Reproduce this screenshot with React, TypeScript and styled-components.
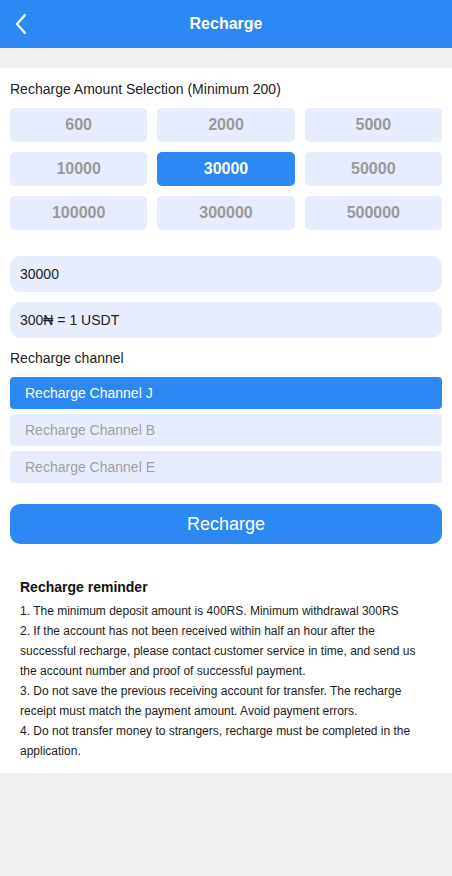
import React, { useState } from "react";
import styled, { createGlobalStyle } from "styled-components";

const Global = createGlobalStyle`
  html, body { margin: 0; padding: 0; background: #f0f0f0; }
  body { font-family: "Liberation Sans", Arial, sans-serif; }
  * { box-sizing: border-box; }
`;

const Page = styled.div`
  width: 452px;
  min-height: 876px;
  background: #f0f0f0;
`;

const Header = styled.header`
  height: 48px;
  background: #2c88f2;
  display: flex;
  align-items: center;
  justify-content: center;
  position: relative;
  color: #fff;
`;

const Back = styled.button`
  position: absolute;
  left: 9px;
  top: 12px;
  width: 24px;
  height: 24px;
  padding: 0;
  border: 0;
  background: transparent;
  display: flex;
  align-items: center;
  justify-content: center;
`;

const Title = styled.h1`
  margin: 0;
  font-size: 16px;
  font-weight: bold;
`;

const Spacer = styled.div`
  height: 20px;
`;

const Main = styled.main`
  background: #fff;
  padding: 12px 10px 12px;
`;

const Label = styled.div`
  font-size: 14px;
  color: #222;
  line-height: 18px;
`;

const AmountGrid = styled.div`
  display: grid;
  grid-template-columns: repeat(3, 1fr);
  gap: 10px;
  margin-top: 10px;
`;

const AmountBtn = styled.button<{ $active?: boolean }>`
  height: 34px;
  border: 0;
  border-radius: 5px;
  background: ${(p) => (p.$active ? "#2c88f2" : "#e8edfd")};
  color: ${(p) => (p.$active ? "#fff" : "#9a9a9a")};
  font-family: inherit;
  font-size: 16px;
  font-weight: bold;
  padding: 0;
`;

const Field = styled.div<{ $first?: boolean }>`
  height: 36px;
  margin-top: ${(p) => (p.$first ? "26px" : "10px")};
  border-radius: 10px;
  background: #e8edfd;
  display: flex;
  align-items: center;
  padding: 0 10px;
  font-size: 14px;
  color: #222;
`;

const ChannelLabel = styled(Label)`
  margin-top: 11px;
`;

const ChannelList = styled.div`
  display: flex;
  flex-direction: column;
  gap: 5px;
  margin-top: 10px;
`;

const Channel = styled.div<{ $active?: boolean }>`
  height: 32px;
  border-radius: 4px;
  background: ${(p) => (p.$active ? "#2c88f2" : "#e8edfd")};
  color: ${(p) => (p.$active ? "#fff" : "#a0a0a0")};
  display: flex;
  align-items: center;
  padding: 0 15px;
  font-size: 14px;
`;

const Submit = styled.button`
  width: 100%;
  height: 40px;
  margin-top: 21px;
  border: 0;
  border-radius: 10px;
  background: #2c88f2;
  color: #fff;
  font-family: inherit;
  font-size: 18px;
`;

const Reminder = styled.section`
  padding: 33px 10px 0;
`;

const ReminderTitle = styled.div`
  font-size: 14px;
  font-weight: bold;
  color: #111;
  line-height: 20px;
`;

const ReminderText = styled.p`
  margin: 4px 0 0;
  font-size: 12px;
  line-height: 20px;
  color: #222;
`;

const amounts = [600, 2000, 5000, 10000, 30000, 50000, 100000, 300000, 500000];
const channels = ["Recharge Channel J", "Recharge Channel B", "Recharge Channel E"];

export default function App() {
  const [amount, setAmount] = useState(30000);
  const [channel, setChannel] = useState(0);
  return (
    <Page>
      <Global />
      <Header>
        <Back aria-label="back">
          <svg width="16" height="24" viewBox="0 0 16 24">
            <path d="M12 3 L4 12 L12 21" fill="none" stroke="#fff" strokeWidth="2.2" strokeLinecap="round" strokeLinejoin="round" />
          </svg>
        </Back>
        <Title>Recharge</Title>
      </Header>
      <Spacer />
      <Main>
        <Label>Recharge Amount Selection (Minimum 200)</Label>
        <AmountGrid>
          {amounts.map((a) => (
            <AmountBtn key={a} $active={a === amount} onClick={() => setAmount(a)}>
              {a}
            </AmountBtn>
          ))}
        </AmountGrid>
        <Field $first>{amount}</Field>
        <Field>300₦ = 1 USDT</Field>
        <ChannelLabel>Recharge channel</ChannelLabel>
        <ChannelList>
          {channels.map((c, i) => (
            <Channel key={c} $active={i === channel} onClick={() => setChannel(i)}>
              {c}
            </Channel>
          ))}
        </ChannelList>
        <Submit>Recharge</Submit>
        <Reminder>
          <ReminderTitle>Recharge reminder</ReminderTitle>
          <ReminderText>
            1. The minimum deposit amount is 400RS. Minimum withdrawal 300RS
            <br />
            2. If the account has not been received within half an hour after the successful recharge, please contact customer service in time, and send us the account number and proof of successful payment.
            <br />
            3. Do not save the previous receiving account for transfer. The recharge receipt must match the payment amount. Avoid payment errors.
            <br />
            4. Do not transfer money to strangers, recharge must be completed in the application.
          </ReminderText>
        </Reminder>
      </Main>
    </Page>
  );
}
